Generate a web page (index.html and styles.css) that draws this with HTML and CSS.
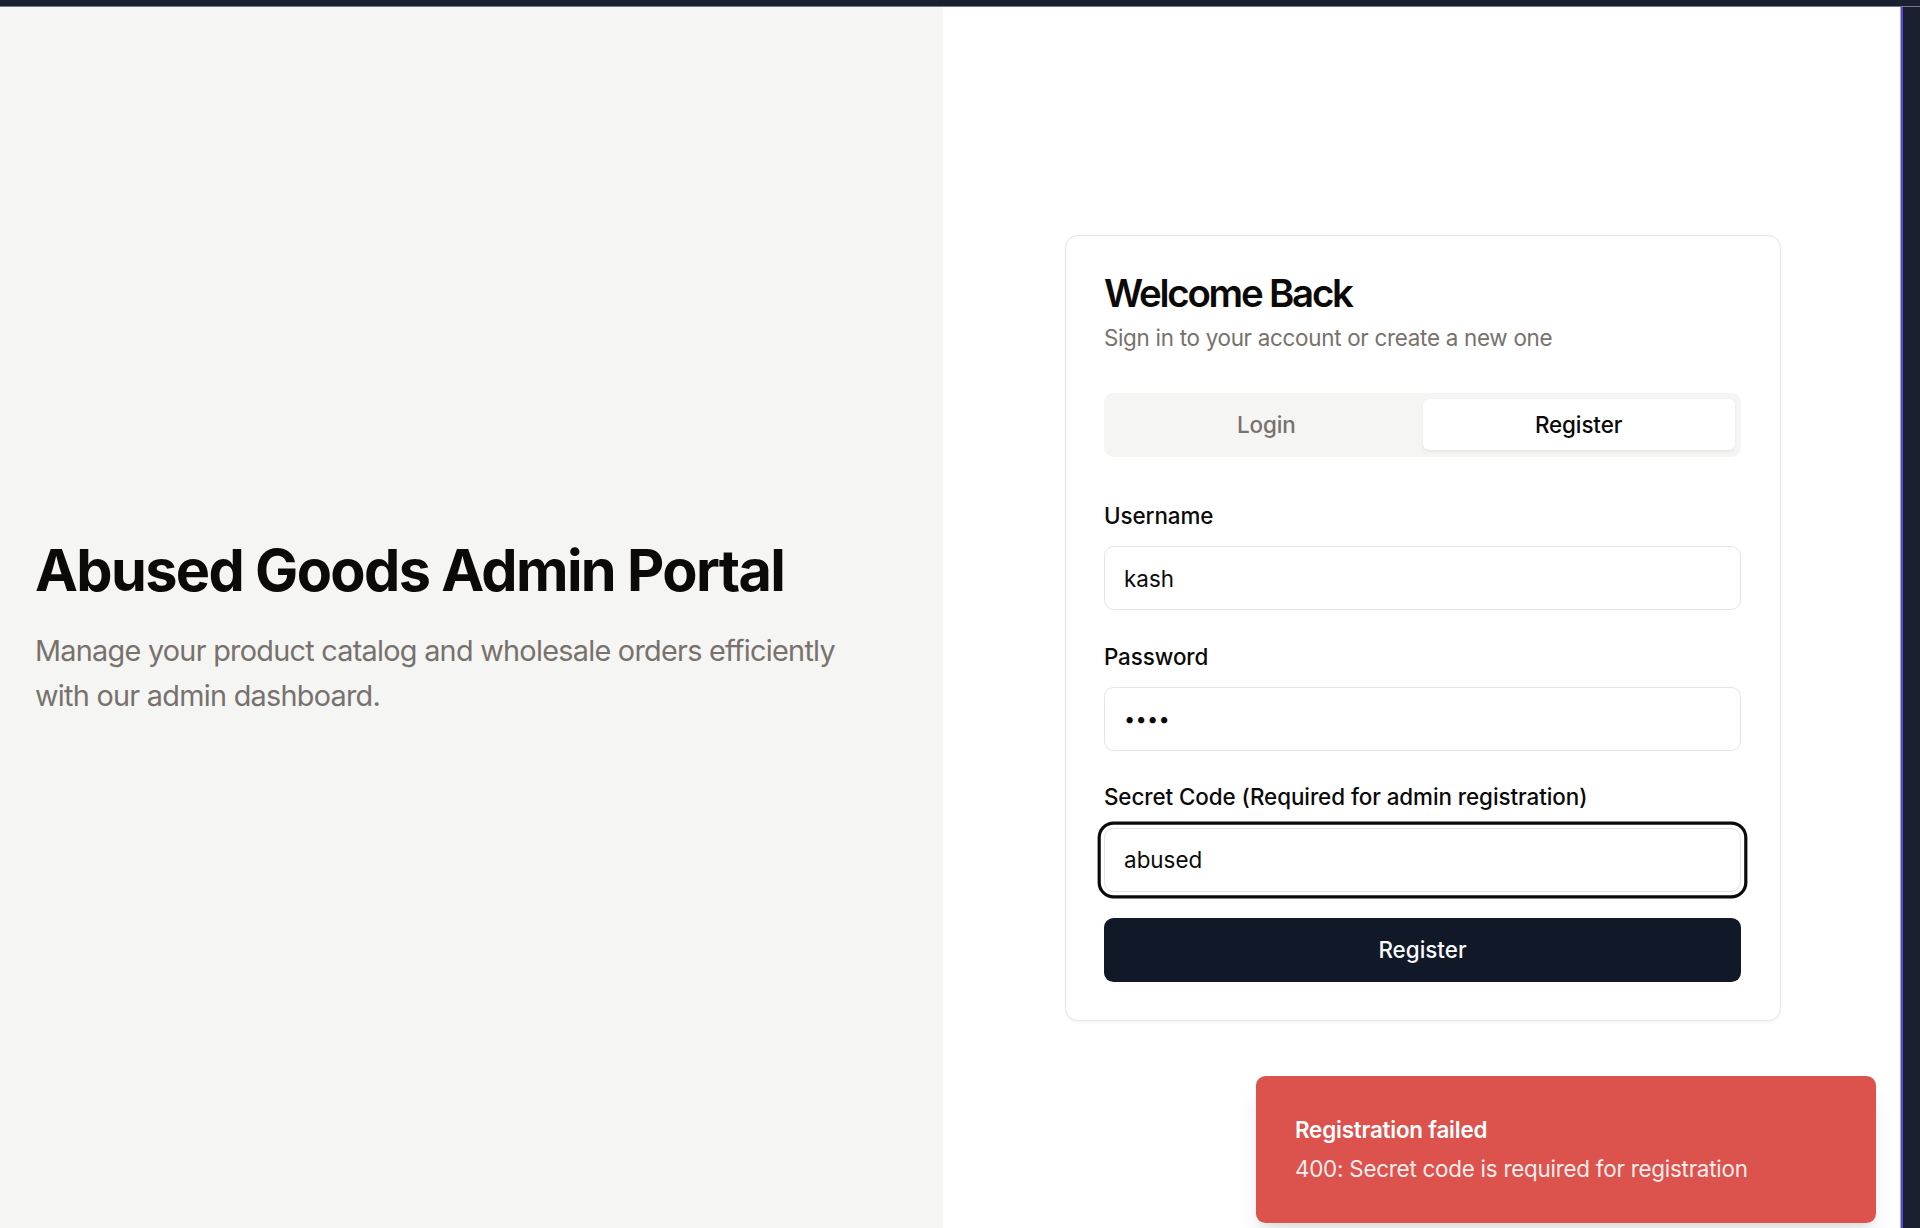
FILE: index.html
```html
<!DOCTYPE html>
<html lang="en">
<head>
<meta charset="utf-8">
<title>Abused Goods Admin Portal</title>
<link rel="stylesheet" href="styles.css">
</head>
<body>
  <div class="chrome-top"></div>
  <div class="frame">
    <div class="page">
      <section class="hero">
        <h1 class="hero-title">Abused Goods Admin Portal</h1>
        <p class="hero-text">Manage your product catalog and wholesale orders efficiently with our admin dashboard.</p>
      </section>
      <section class="auth">
        <div class="card">
          <div class="card-header">
            <h2 class="card-title">Welcome Back</h2>
            <p class="card-desc">Sign in to your account or create a new one</p>
          </div>
          <div class="card-content">
            <div class="tabs">
              <div class="tab">Login</div>
              <div class="tab active">Register</div>
            </div>
            <form class="form">
              <div class="field">
                <label class="label">Username</label>
                <div class="input">kash</div>
              </div>
              <div class="field">
                <label class="label">Password</label>
                <div class="input dots">&#8226;&#8226;&#8226;&#8226;</div>
              </div>
              <div class="field">
                <label class="label">Secret Code (Required for admin registration)</label>
                <div class="input focused">abused</div>
              </div>
              <div class="button">Register</div>
            </form>
          </div>
        </div>
      </section>
      <div class="toast">
        <div class="toast-title">Registration failed</div>
        <div class="toast-desc">400: Secret code is required for registration</div>
      </div>
    </div>
    <div class="edge-light"></div>
    <div class="edge-purple"></div>
  </div>
</body>
</html>
```

FILE: styles.css
```css
* { box-sizing: border-box; }
html, body {
  margin: 0;
  padding: 0;
  width: 1920px;
  height: 1228px;
  overflow: hidden;
  background: #1b2030;
  font-family: Inter, "Noto Sans", "Liberation Sans", sans-serif;
  color: #0c0a09;
}
.chrome-top {
  height: 7px;
  background: #1b2030;
  border-bottom: 1px solid #767a88;
}
.frame {
  display: flex;
  height: 1242px;
}
.page {
  position: relative;
  flex: 0 0 1900px;
  height: 1242px;
  display: flex;
  background: #ffffff;
}
.edge-light { flex: 0 0 1px; background: #a9a3e6; }
.edge-purple { flex: 0 0 2px; background: #5644d0; }

.hero {
  flex: 0 0 943px;
  background: #f5f5f4;
  display: flex;
  flex-direction: column;
  justify-content: center;
  padding: 0 40px 0 35px;
}
.hero-title {
  margin: 0 0 27px;
  font-size: 57.6px;
  line-height: 64px;
  font-weight: 700;
  letter-spacing: -1.65px;
  color: #0c0a09;
}
.hero-text {
  margin: 0;
  max-width: 830px;
  font-size: 28.8px;
  line-height: 44.8px;
  letter-spacing: -0.72px;
  color: #78716c;
}

.auth {
  flex: 1;
  display: flex;
  align-items: center;
  justify-content: center;
  padding-left: 2px;
}
.card {
  width: 716px;
  background: #fff;
  border: 1px solid #e7e5e4;
  border-radius: 12.8px;
  box-shadow: 0 1.6px 3.2px rgba(0,0,0,0.04);
}
.card-header {
  padding: 38.4px 38.4px 38.4px;
}
.card-title {
  margin: 0;
  font-size: 38.4px;
  line-height: 38.4px;
  font-weight: 600;
  letter-spacing: -2.2px;
  color: #0c0a09;
}
.card-desc {
  margin: 9.6px 0 0;
  font-size: 22.4px;
  line-height: 32px;
  letter-spacing: -0.28px;
  color: #78716c;
}
.card-content {
  padding: 0 38.4px 38.4px;
}
.tabs {
  height: 64px;
  background: #f5f5f4;
  border-radius: 9.6px;
  padding: 6.4px;
  display: grid;
  grid-template-columns: 1fr 1fr;
}
.tab {
  display: flex;
  align-items: center;
  justify-content: center;
  font-size: 22.4px;
  font-weight: 500;
  letter-spacing: -0.1px;
  color: #78716c;
  border-radius: 6.4px;
}
.tab.active {
  background: #fff;
  color: #0c0a09;
  box-shadow: 0 1.6px 3.2px rgba(0,0,0,0.06);
}
.form {
  margin: 48px 0 0;
  display: flex;
  flex-direction: column;
}
.field {
  display: flex;
  flex-direction: column;
  margin-bottom: 35.2px;
}
.field:nth-child(3) { margin-bottom: 25.6px; }
.label {
  font-size: 22.4px;
  line-height: 22.4px;
  font-weight: 500;
  letter-spacing: -0.06px;
  color: #0c0a09;
  margin-bottom: 19.2px;
}
.input {
  height: 64px;
  border: 1.6px solid #e7e5e4;
  border-radius: 9.6px;
  background: #fff;
  padding: 0 19.2px;
  display: flex;
  align-items: center;
  font-size: 22.4px;
  color: #0c0a09;
}
.input.dots {
  font-size: 20px;
  letter-spacing: 0.2px;
}
.input.focused {
  box-shadow: 0 0 0 3.2px #fff, 0 0 0 6.4px #0c0a09;
}
.button {
  height: 64px;
  border-radius: 9.6px;
  background: #111827;
  color: #f8fafc;
  display: flex;
  align-items: center;
  justify-content: center;
  font-size: 22.4px;
  font-weight: 500;
}

.toast {
  position: absolute;
  right: 24px;
  bottom: 26px;
  width: 620px;
  background: #dc524d;
  border-radius: 9.6px;
  padding: 38.4px 51.2px 38.4px 39px;
  color: #fff;
  box-shadow: 0 16px 24px -4px rgba(0,0,0,0.1), 0 6px 10px -6px rgba(0,0,0,0.1);
  display: flex;
  flex-direction: column;
  gap: 6.4px;
}
.toast-title {
  font-size: 22.4px;
  line-height: 32px;
  font-weight: 600;
  letter-spacing: -0.2px;
}
.toast-desc {
  font-size: 22.4px;
  line-height: 32px;
  letter-spacing: -0.24px;
  opacity: 0.9;
}
```
